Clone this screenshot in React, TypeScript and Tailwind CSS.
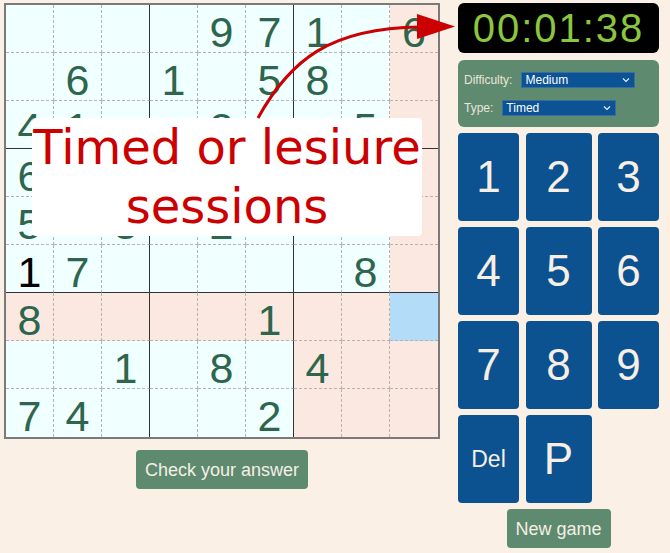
import React from "react";

const puzzle: (number | null)[][] = [
  [null, null, null, null, 9, 7, 1, null, 6],
  [null, 6, null, 1, null, 5, 8, null, null],
  [4, 1, null, null, 2, null, null, 5, null],
  [6, null, null, null, null, null, null, null, null],
  [5, null, 3, null, 2, null, null, null, null],
  [1, 7, null, null, null, null, null, 8, null],
  [8, null, null, null, null, 1, null, null, null],
  [null, null, 1, null, 8, null, 4, null, null],
  [7, 4, null, null, null, 2, null, null, null],
];

const selR = 6;
const selC = 8;

function cellBg(r: number, c: number) {
  if (r === selR && c === selC) return "bg-[#b3dcf8]";
  const sameBox = Math.floor(r / 3) === Math.floor(selR / 3) && Math.floor(c / 3) === Math.floor(selC / 3);
  if (r === selR || c === selC || sameBox) return "bg-[#fbe8e0]";
  return "bg-[#f0ffff]";
}

function Cell({ r, c }: { r: number; c: number }) {
  const v = puzzle[r][c];
  const right =
    c === 8
      ? ""
      : c % 3 === 2
      ? "border-r border-r-[#333333] [border-right-style:solid]"
      : "border-r border-r-[#b4b4b4] [border-right-style:dashed]";
  const bottom =
    r === 8
      ? ""
      : r % 3 === 2
      ? "border-b border-b-[#333333] [border-bottom-style:solid]"
      : "border-b border-b-[#b4b4b4] [border-bottom-style:dashed]";
  const color = r === 5 && c === 0 ? "text-black" : "text-[#2d664c]";
  return (
    <div
      className={`box-border w-[48px] h-[48px] text-center text-[43px] leading-[42px] pt-[6px] ${right} ${bottom} ${cellBg(r, c)} ${color}`}
    >
      {v ?? ""}
    </div>
  );
}

function FakeSelect({ value, width }: { value: string; width: string }) {
  return (
    <div
      className={`${width} h-[16px] bg-[#0b5394] border border-[#3a6c9c] flex items-center justify-between pl-[3px] pr-[4px] text-[12px] leading-none text-white`}
    >
      <span>{value}</span>
      <svg width="8" height="6" viewBox="0 0 8 6">
        <path d="M1 1.5 L4 4.5 L7 1.5" fill="none" stroke="#e8eef5" strokeWidth="1.2" />
      </svg>
    </div>
  );
}

function Key({ label, small }: { label: string; small?: boolean }) {
  return (
    <div
      className={`h-[88px] rounded-[4px] bg-[#0c5290] text-[#f8efe4] flex items-center justify-center leading-none ${
        small ? "text-[23px]" : "text-[44px]"
      }`}
    >
      {label}
    </div>
  );
}

export default function App() {
  return (
    <div
      className="relative w-[670px] h-[553px] bg-[#faf0e6] flex items-start gap-[18px] pl-[4px] pt-[3px] overflow-hidden"
      style={{ fontFamily: '"Liberation Sans", Arial, sans-serif' }}
    >
      <div className="flex flex-col items-center">
        <div className="border-2 border-[#7a7a7a] grid grid-cols-[repeat(9,48px)]">
          {puzzle.map((row, r) => row.map((_, c) => <Cell key={`${r}-${c}`} r={r} c={c} />))}
        </div>
        <button className="mt-[11px] h-[39px] px-[9px] rounded-[4px] bg-[#5e8a70] text-[#f5efe4] text-[18px] leading-none">
          Check your answer
        </button>
      </div>

      <div className="w-[201px] flex flex-col">
        <div className="h-[50px] rounded-[6px] bg-black flex items-center justify-center text-[#8cc63e] text-[40px] leading-none tracking-[2px]">
          00:01:38
        </div>
        <div className="mt-[7px] h-[67px] rounded-[6px] bg-[#5e8a70] flex flex-col justify-center gap-[12px] pl-[6px] text-[12px] leading-none text-[#ebe6da]">
          <div className="flex items-center gap-[9px]">
            <span>Difficulty:</span>
            <FakeSelect value="Medium" width="w-[114px]" />
          </div>
          <div className="flex items-center gap-[9px]">
            <span>Type:</span>
            <FakeSelect value="Timed" width="w-[114px]" />
          </div>
        </div>
        <div className="mt-[6px] grid grid-cols-[61px_66px_61px] gap-x-[6.5px] gap-y-[6px]">
          {["1", "2", "3", "4", "5", "6", "7", "8", "9"].map((d) => (
            <Key key={d} label={d} />
          ))}
          <Key label="Del" small />
          <Key label="P" />
        </div>
        <button className="mt-[6px] self-center h-[39px] w-[104px] rounded-[4px] bg-[#5e8a70] text-[#f5efe4] text-[18px] leading-none">
          New game
        </button>
      </div>

      <div
        className="absolute left-[32px] top-[118px] w-[390px] bg-white rounded-[4px] text-center text-[#cc0000] text-[48px] leading-[59px]"
        style={{ fontFamily: '"DejaVu Sans", sans-serif' }}
      >
        Timed or lesiure
        <br />
        sessions
      </div>

      <svg className="absolute left-0 top-0 pointer-events-none" width="670" height="553" viewBox="0 0 670 553">
        <path d="M258 118 C 290 60, 330 28, 420 27" fill="none" stroke="#cc0000" strokeWidth="3" />
        <polygon points="417,14 455,26.5 417,39" fill="#cc0000" />
      </svg>
    </div>
  );
}
